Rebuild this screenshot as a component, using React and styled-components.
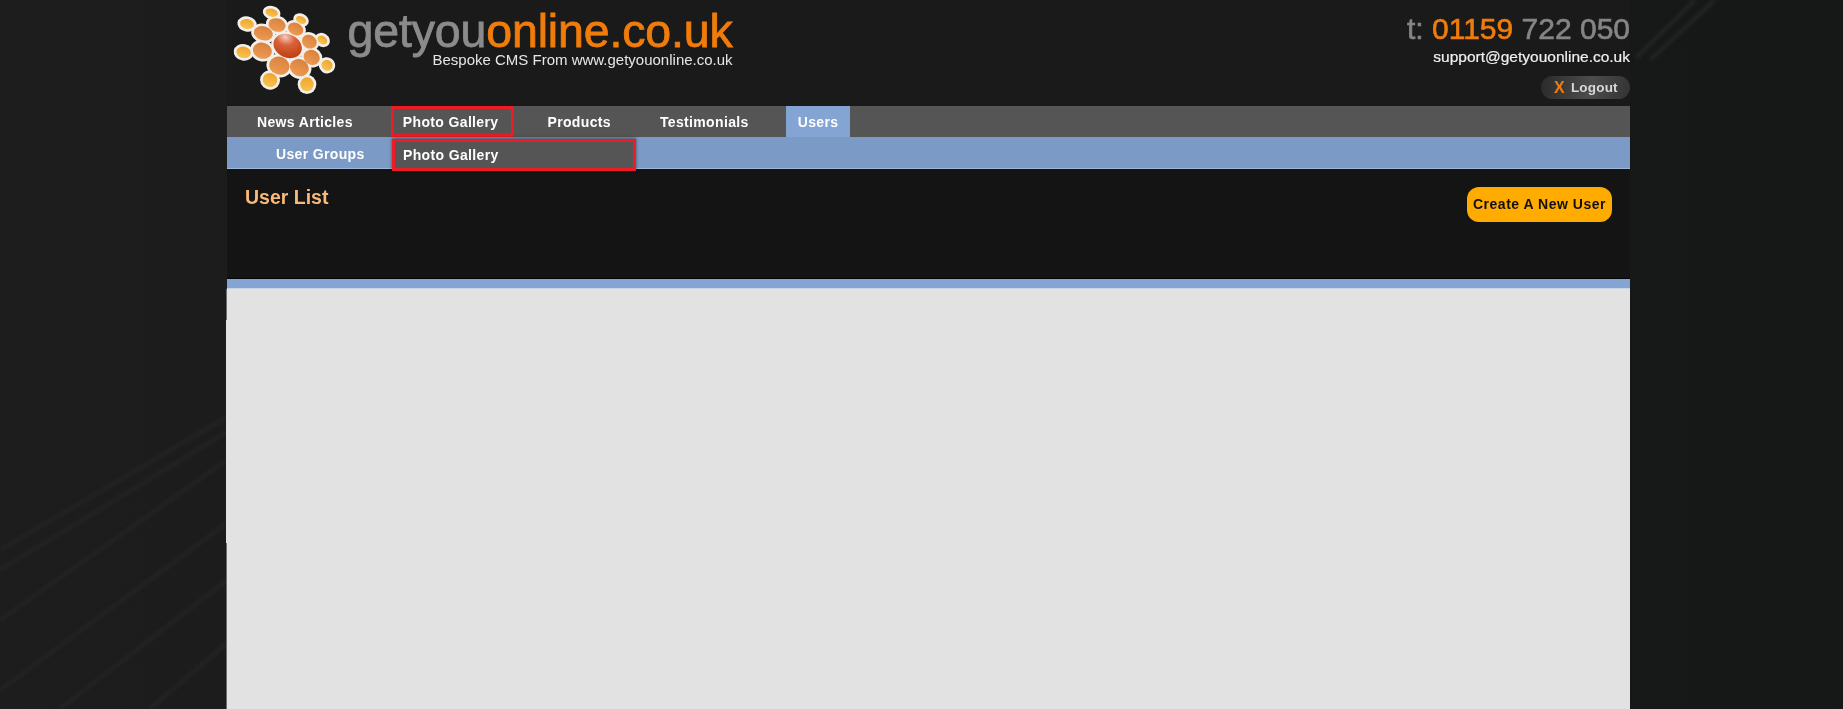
import React from "react";
import styled, { createGlobalStyle } from "styled-components";

const GlobalStyle = createGlobalStyle`
  html, body {
    margin: 0;
    height: 100%;
    overflow: hidden;
    background: linear-gradient(90deg, #1d1d1d 0%, #1a1a1a 50%, #161717 100%);
    font-family: "Liberation Sans", Arial, sans-serif;
  }
`;

const Backdrop = styled.svg`
  position: fixed;
  inset: 0;
  width: 1843px;
  height: 709px;
  z-index: 0;
  filter: blur(1.5px);
`;

const Page = styled.div`
  position: relative;
  z-index: 1;
  width: 1403px;
  height: 709px;
  margin-left: 227px;
  display: flex;
  flex-direction: column;
`;

const Header = styled.header`
  height: 106px;
  flex: none;
  background: #1a1a1a;
  display: flex;
  justify-content: space-between;
`;

const Brand = styled.div`
  display: flex;
  align-items: flex-start;
  margin-left: -2px;
`;

const BrandText = styled.div`
  margin-left: 2.5px;
  padding-top: 9px;
  display: flex;
  flex-direction: column;
  align-items: flex-end;
`;

const Wordmark = styled.div`
  font-size: 46.5px;
  line-height: 44px;
  letter-spacing: -0.15px;
  color: #f07c0a;
  white-space: nowrap;
  -webkit-text-stroke: 0.8px #f07c0a;
  span {
    color: #8b8b8c;
    -webkit-text-stroke: 0.8px #8b8b8c;
  }
`;

const Strapline = styled.div`
  font-size: 15px;
  line-height: 14px;
  color: #e6e6e6;
  white-space: nowrap;
`;

const Contact = styled.div`
  display: flex;
  flex-direction: column;
  align-items: flex-end;
  padding-top: 12px;
`;

const Phone = styled.div`
  font-size: 30px;
  line-height: 34px;
  color: #858585;
  white-space: nowrap;
  -webkit-text-stroke: 0.6px #858585;
  span {
    color: #f07c0a;
    -webkit-text-stroke: 0.6px #f07c0a;
  }
`;

const Email = styled.div`
  font-size: 15.5px;
  line-height: 18px;
  color: #f0f0f0;
  margin-top: 2px;
  -webkit-text-stroke: 0.2px #f0f0f0;
`;

const LogoutButton = styled.div`
  margin-top: 10px;
  width: 89px;
  height: 23px;
  box-sizing: border-box;
  padding-left: 13px;
  border-radius: 12px;
  background: linear-gradient(100deg, #2a2a2a, #4c4c4c 55%, #333333);
  display: flex;
  align-items: center;
  gap: 6px;
  font-size: 13.5px;
  font-weight: 700;
  letter-spacing: 0.2px;
  color: #d8d8d8;
`;

const LogoutMark = styled.span`
  color: #f07c0a;
  font-size: 16px;
  font-weight: 700;
`;

const Nav = styled.nav`
  height: 31px;
  flex: none;
  background: #555555;
  display: flex;
  gap: 25px;
  padding-left: 18px;
`;

const NavItem = styled.a`
  display: flex;
  align-items: center;
  box-sizing: border-box;
  padding: 0 ${(p) => (p.$marked ? "16px" : "12px")} 0 12px;
  margin-left: ${(p) => (p.$marked ? "1px" : "0")};
  margin-right: ${(p) => (p.$marked ? "-4px" : "0")};
  font-size: 14px;
  font-weight: 700;
  letter-spacing: 0.35px;
  white-space: nowrap;
  color: #ffffff;
  background: ${(p) => (p.$active ? "#84a4d4" : "transparent")};
  box-shadow: ${(p) => (p.$marked ? "inset 0 0 0 3px #ed1c24" : "none")};
`;

const SubNav = styled.div`
  position: relative;
  height: 32px;
  flex: none;
  background: #7c9ac6;
  border-bottom: 1px solid #9db6da;
  box-sizing: border-box;
  display: flex;
  align-items: center;
  padding: 2px 0 0 49px;
`;

const SubItem = styled.a`
  font-size: 14px;
  font-weight: 700;
  letter-spacing: 0.35px;
  color: #ffffff;
`;

const Dropdown = styled.div`
  position: absolute;
  left: 165px;
  top: 2px;
  width: 244px;
  height: 32px;
  box-sizing: border-box;
  padding: 0 0 1px 8px;
  display: flex;
  align-items: center;
  background: #555555;
  border: 3px solid #ed1c24;
  box-shadow: 0 -1px 3px rgba(0, 0, 0, 0.5);
  font-size: 14px;
  font-weight: 700;
  letter-spacing: 0.35px;
  color: #ffffff;
`;

const TitleBar = styled.div`
  height: 110px;
  flex: none;
  box-sizing: border-box;
  background: #141414;
  border-bottom: 1px solid #050505;
  display: flex;
  justify-content: space-between;
  align-items: flex-start;
  padding: 18px 18px 0 18px;
`;

const Title = styled.h1`
  margin: -1px 0 0;
  font-size: 19.5px;
  line-height: 23px;
  font-weight: 700;
  color: #f9b97a;
`;

const CreateButton = styled.a`
  height: 35px;
  box-sizing: border-box;
  padding: 0 6px 1px;
  display: flex;
  align-items: center;
  border-radius: 12px;
  background: #ffab00;
  font-size: 14px;
  font-weight: 700;
  letter-spacing: 0.52px;
  color: #111111;
`;

const Strip = styled.div`
  height: 10px;
  flex: none;
  background: #84a4d4;
  border-bottom: 1px solid #c9d4e6;
  box-sizing: border-box;
`;

const Content = styled.main`
  position: relative;
  flex: 1;
  background: #e2e2e2;
  box-shadow: -1px 0 0 #6e6e6e;
  &::before {
    content: "";
    position: absolute;
    left: -1px;
    top: 31px;
    width: 1px;
    height: 223px;
    background: #e2e2e2;
  }
`;

// logo spots, traced in a 360x318 box: x, y, rx, ry, tilt
const innerSpots = [
  [156, 75, 26, 20, 15], [212, 87, 24, 18, 25], [115, 100, 29, 21, 15], [253, 125, 23, 20, 30],
  [112, 152, 29, 24, 15], [260, 172, 25, 22, 30], [163, 197, 31, 27, 20], [223, 203, 29, 25, 25],
];
const outerSpots = [
  [140, 38, 19, 12, 15], [228, 60, 16, 11, 25], [66, 72, 21, 15, 10], [292, 120, 16, 12, 35],
  [56, 157, 22, 17, 10], [306, 196, 17, 16, 35], [135, 240, 22, 21, 20], [246, 253, 20, 21, 0],
];

// white rims go down first, so no rim cuts into a neighbouring spot
const Rim = ({ spot }) => {
  const [x, y, rx, ry, tilt] = spot;
  return (
    <ellipse cx={x} cy={y} rx={rx + 8} ry={ry + 8} fill="#f2efea" transform={`rotate(${tilt} ${x} ${y})`} />
  );
};

const Spot = ({ spot, fill }) => {
  const [x, y, rx, ry, tilt] = spot;
  return <ellipse cx={x} cy={y} rx={rx} ry={ry} fill={fill} transform={`rotate(${tilt} ${x} ${y})`} />;
};

const Logo = () => (
  <svg width="120" height="106" viewBox="0 0 360 318">
    <defs>
      <radialGradient id="core" cx="30%" cy="20%" r="85%">
        <stop offset="0" stopColor="#f3cdbd" />
        <stop offset="0.4" stopColor="#d9623a" />
        <stop offset="1" stopColor="#bf3f10" />
      </radialGradient>
      <linearGradient id="inner" x1="0" y1="0" x2="0" y2="1">
        <stop offset="0" stopColor="#d9823f" />
        <stop offset="1" stopColor="#ee9a52" />
      </linearGradient>
      <linearGradient id="outer" x1="0" y1="0" x2="0" y2="1">
        <stop offset="0" stopColor="#f0a52c" />
        <stop offset="1" stopColor="#f8c452" />
      </linearGradient>
      <filter id="soft">
        <feGaussianBlur stdDeviation="1.5" />
      </filter>
    </defs>
    <g filter="url(#soft)">
      {outerSpots.map(([x, y]) => (
        <line key={x} x1="188" y1="138" x2={x} y2={y} stroke="#f2efea" strokeWidth="14" />
      ))}
      {[...innerSpots, ...outerSpots].map((s) => (
        <Rim key={s[0]} spot={s} />
      ))}
      <ellipse cx="188" cy="138" rx="51" ry="42" fill="#f2efea" transform="rotate(25 188 138)" />
      {innerSpots.map((s) => (
        <Spot key={s[0]} spot={s} fill="url(#inner)" />
      ))}
      {outerSpots.map((s) => (
        <Spot key={s[0]} spot={s} fill="url(#outer)" />
      ))}
      <ellipse cx="188" cy="138" rx="44" ry="35" fill="url(#core)" transform="rotate(25 188 138)" />
    </g>
  </svg>
);

const streaks = [
  "M0 550 L227 417", "M0 570 L227 432", "M0 620 L227 460", "M0 690 L227 523",
  "M60 709 L227 580", "M150 709 L227 643", "M1636 58 L1695 0", "M1650 60 L1715 0",
];

const App = () => (
  <>
    <GlobalStyle />
    <Backdrop viewBox="0 0 1843 709">
      {streaks.map((d) => (
        <path key={d} d={d} stroke="#212222" strokeWidth="5" fill="none" />
      ))}
    </Backdrop>
    <Page>
      <Header>
        <Brand>
          <Logo />
          <BrandText>
            <Wordmark>
              <span>getyou</span>online.co.uk
            </Wordmark>
            <Strapline>Bespoke CMS From www.getyouonline.co.uk</Strapline>
          </BrandText>
        </Brand>
        <Contact>
          <Phone>
            t: <span>01159</span> 722 050
          </Phone>
          <Email>support@getyouonline.co.uk</Email>
          <LogoutButton>
            <LogoutMark>X</LogoutMark> Logout
          </LogoutButton>
        </Contact>
      </Header>
      <Nav>
        <NavItem>News Articles</NavItem>
        <NavItem $marked>Photo Gallery</NavItem>
        <NavItem>Products</NavItem>
        <NavItem>Testimonials</NavItem>
        <NavItem $active>Users</NavItem>
      </Nav>
      <SubNav>
        <SubItem>User Groups</SubItem>
        <Dropdown>Photo Gallery</Dropdown>
      </SubNav>
      <TitleBar>
        <Title>User List</Title>
        <CreateButton>Create A New User</CreateButton>
      </TitleBar>
      <Strip />
      <Content />
    </Page>
  </>
);

export default App;
